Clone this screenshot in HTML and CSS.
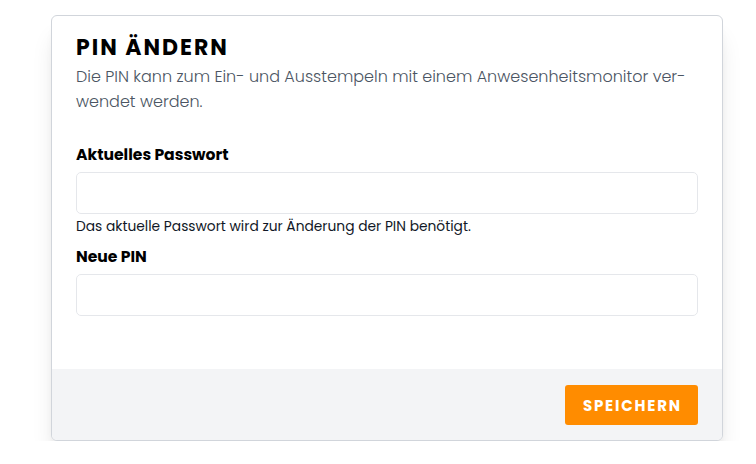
FILE: index.html
```html
<!DOCTYPE html>
<html lang="de">
<head>
<meta charset="utf-8">
<title>PIN ändern</title>
<link rel="stylesheet" href="styles.css">
</head>
<body>
<div class="page">
  <form class="card">
    <div class="card-body">
      <h2 class="title">PIN ÄNDERN</h2>
      <p class="desc">Die PIN kann zum Ein- und Ausstempeln mit einem Anwesenheitsmonitor ver&shy;wendet werden.</p>
      <div class="fields">
        <div class="field">
          <label class="label" for="pw">Aktuelles Passwort</label>
          <input class="input" id="pw" type="password">
          <p class="help">Das aktuelle Passwort wird zur Änderung der PIN benötigt.</p>
        </div>
        <div class="field">
          <label class="label" for="pin">Neue PIN</label>
          <input class="input" id="pin" type="password">
        </div>
      </div>
    </div>
    <div class="card-footer">
      <button class="btn" type="button">SPEICHERN</button>
    </div>
  </form>
</div>
</body>
</html>
```

FILE: styles.css
```css
* { box-sizing: border-box; }
html, body { margin: 0; background: #ffffff; }
body {
  font-family: "Poppins", "Open Sans", "Noto Sans", sans-serif;
  color: #111827;
}
.page {
  padding: 15px 0 0 51px;
}
.card {
  width: 672px;
  border: 1px solid #d1d5db;
  border-radius: 6px;
  overflow: hidden;
  background: #ffffff;
  box-shadow: 0 20px 25px -5px rgba(0,0,0,0.12), 0 8px 10px -6px rgba(0,0,0,0.12);
  margin: 0;
}
.card-body {
  padding: 16px 24px 53px 24px;
}
.title {
  margin: 0;
  font-size: 22px;
  line-height: 32px;
  font-weight: 700;
  letter-spacing: 0.09em;
  color: #000;
}
.desc {
  margin: 0;
  font-size: 16px;
  line-height: 25px;
  font-weight: 300;
  color: #4b5563;
  hyphens: manual;
}
.fields {
  margin-top: 30px;
  display: flex;
  flex-direction: column;
  gap: 9px;
}
.field { display: flex; flex-direction: column; }
.label {
  font-size: 15.6px;
  line-height: 22px;
  font-weight: 700;
  color: #000;
  margin-bottom: 6px;
}
.input {
  height: 42px;
  width: 100%;
  border: 1px solid #e5e7eb;
  border-radius: 5px;
  background: #fff;
  font: inherit;
  margin: 0;
}
.help {
  margin: 3px 0 0 0;
  font-size: 13.8px;
  line-height: 20px;
  color: #111827;
}
.card-footer {
  background: #f3f4f6;
  padding: 16px 24px 15px 24px;
  display: flex;
  justify-content: flex-end;
}
.btn {
  height: 40px;
  width: 133px;
  background: #ff8c00;
  color: #fff;
  border: 0;
  border-radius: 3px;
  font-family: inherit;
  font-weight: 700;
  font-size: 15px;
  letter-spacing: 0.12em;
  padding: 0 0 0 0.12em;
}
```
